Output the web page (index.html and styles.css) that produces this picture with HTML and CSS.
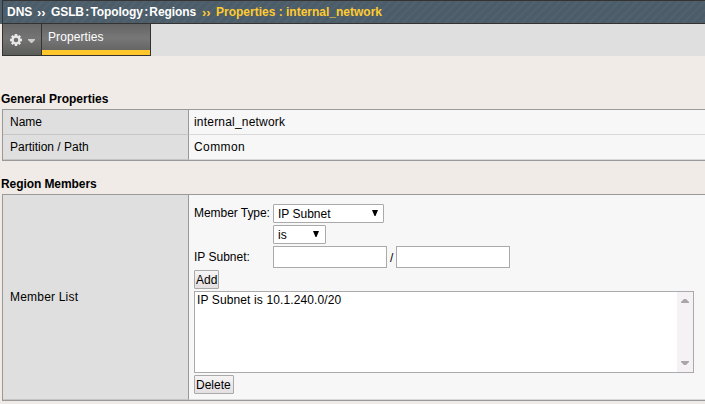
FILE: index.html
```html
<!DOCTYPE html>
<html lang="en">
<head>
<meta charset="utf-8">
<title>Properties : internal_network</title>
<link rel="stylesheet" href="styles.css">
</head>
<body>
<header class="crumbs"><div class="trail">
<span class="c-dns">DNS</span><span class="sep s1">››</span><span class="c-path">GSLB : Topology : Regions</span><span class="sep s2">››</span><span class="c-now">Properties : internal_network</span>
</div></header>
<nav class="tabs">
<div class="gear">
<svg width="38" height="31" viewBox="0 0 38 31"><g fill="none" stroke="#e8e8e8"><circle cx="13" cy="16" r="3.5" stroke-width="2.4"/><path stroke-width="2.4" d="M13 10v2.2M13 19.8V22M7 16h2.2M16.8 16H19M8.8 11.8l1.5 1.5M15.7 18.7l1.5 1.5M8.8 20.2l1.5-1.5M15.7 13.3l1.5-1.5"/></g><path d="M25 15h7v1l-3 3h-1l-3-3z" fill="#ccc"/></svg>
</div>
<div class="tab"><span>Properties</span></div>
</nav>
<main>
<h2 class="h-general">General Properties</h2>
<section class="table">
<div class="row"><div class="label"><span class="t-name">Name</span></div><div class="value"><span class="t-net">internal_network</span></div></div>
<div class="row"><div class="label"><span class="t-part">Partition / Path</span></div><div class="value"><span class="t-common">Common</span></div></div>
</section>
<h2 class="h-region">Region Members</h2>
<section class="table">
<div class="row members"><div class="label"><span class="t-list">Member List</span></div>
<div class="value form">
<div class="line"><span class="field"><span class="t-type">Member Type:</span></span><div class="select wide"><span class="t-sub">IP Subnet</span><svg width="6" height="6"><path d="M0 0h6L3.5 6h-1z"/></svg></div></div>
<div class="line"><span class="field"></span><div class="select"><span class="t-is">is</span><svg width="6" height="6"><path d="M0 0h6L3.5 6h-1z"/></svg></div></div>
<div class="line inputs"><span class="field"><span class="t-subl">IP Subnet:</span></span><input type="text" aria-label="Address"><span class="slash">/</span><input type="text" aria-label="Prefix length"></div>
<button class="add"><span>Add</span></button>
<div class="listbox"><span class="t-item">IP Subnet is 10.1.240.0/20</span><div class="scroll"><svg width="8" height="4"><path d="M0 4V3l3-3h2l3 3v1z"/></svg><svg width="8" height="4"><path d="M0 0v1l3 3h2l3-3V0z"/></svg></div></div>
<button class="delete"><span>Delete</span></button>
</div></div>
</section>
</main>
</body>
</html>
```
FILE: styles.css
```css
* { box-sizing: border-box; }
body { margin: 0; height: 404px; overflow: hidden; background: #f0ebe7; color: #000; font: 12px/16px "Liberation Sans", Arial, sans-serif; }
span { white-space: nowrap; }
svg { display: block; }
.crumbs { height: 24px; padding-left: 2px; background: #50606d; }
.trail { height: 24px; display: flex; align-items: center; padding-left: 4px; border: solid #333; border-width: 1px 0 1px 1px; color: #fff; font-weight: bold; background: repeating-linear-gradient(135deg, #4c5d6a 0 3px, #51616d 4px 5px, #4c5d6a 6px); }
.c-dns { width: 30px; }
.sep { width: 14px; padding-top: 1px; font-size: 13px; letter-spacing: 0; line-height: 16px; }
.c-path { width: 151px; letter-spacing: -0.1px; word-spacing: -1.9px; }
.s2, .c-now { color: #ffcb2f; }
.tabs { display: flex; height: 32px; margin-left: 2px; background: #dfdfdf; }
.gear { width: 39px; height: 32px; border: solid #333; border-width: 0 0 1px 1px; background: linear-gradient(#666, #747474 45%, #5c5e5a); }
.tab { width: 110px; height: 32px; padding: 5px 0 0 6px; border: 1px solid #333; border-top: 0; color: #fff; letter-spacing: 0.1px; background: linear-gradient(#ffc72b, #ffc72b) bottom / 100% 5px no-repeat, linear-gradient(#646464, #777 45%, #5e5e5e); }
main { padding: 35px 0 0 2px; }
h2 { margin: 0 0 0 -1px; height: 18px; font-size: 12px; line-height: 16px; }
.h-region { margin-top: 15px; height: 18px; letter-spacing: -0.08px; }
.table { border: solid #999; border-width: 1px 0 1px 1px; background: #f7f7f7; }
.row { display: flex; height: 25px; border-bottom: 1px solid #d9d9d9; }
.label { width: 186px; padding: 4px 0 0 7px; background: #dfdfdf; border-right: 1px solid #999; }
.row .label { margin-bottom: -1px; border-bottom: 1px solid #c5c5c5; }
.value { flex: 1; padding: 4px 0 0 5px; }
.members { height: 205px; }
.members .label { padding-top: 94px; }
.form { display: flex; flex-direction: column; align-items: flex-start; padding-top: 9px; }
.line { display: flex; height: 19px; margin-bottom: 2px; }
.field { width: 79px; padding-top: 1px; }
.select { width: 53px; height: 19px; display: flex; justify-content: space-between; padding: 1px 6px 0 4px; background: #fff; border: 1px solid #aaa; border-radius: 1px; }
.select svg { margin-top: 4px; }
.wide { width: 111px; padding-right: 5px; }
.inputs { height: 22px; }
.inputs .field { padding-top: 3px; }
input { width: 114px; height: 22px; border: 1px solid #aaa; background: #fff; padding: 0 3px; }
.slash { width: 9px; padding: 4px 0 0 3px; }
button { height: 19px; padding: 1px 0 0 1px; border: 1px solid #aaa; border-radius: 1px; background: linear-gradient(#f6f4f4, #e4dfe0); font: 12px/16px "Liberation Sans", Arial, sans-serif; text-align: left; color: #000; }
.add { width: 25px; margin-bottom: 2px; }
.listbox { width: 500px; height: 82px; display: flex; justify-content: space-between; padding-left: 2px; border: 1px solid #aaa; background: #fff; margin-bottom: 2px; }
.scroll { width: 16px; display: flex; flex-direction: column; justify-content: space-between; align-items: center; padding: 7px 0; background: #f6f1f5; }
.scroll svg { fill: #aaa5a8; }
.delete { width: 40px; }
.t-net { letter-spacing: 0.2px; }
.t-common { letter-spacing: 0.4px; }
.t-list { letter-spacing: 0.2px; }
.t-item { letter-spacing: 0.12px; }
.t-type { letter-spacing: -0.05px; }
```
